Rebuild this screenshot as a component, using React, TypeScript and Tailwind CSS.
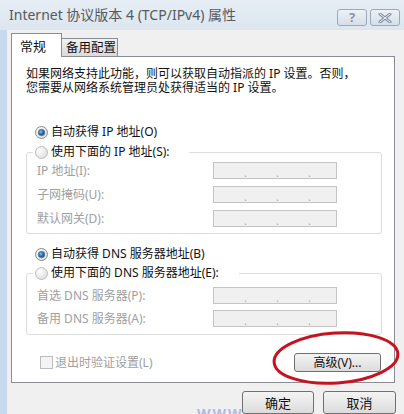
import React from "react";

function Radio({ checked, disabled }: { checked?: boolean; disabled?: boolean }) {
  return (
    <svg width="13" height="13" viewBox="0 0 13 13" className="shrink-0">
      <defs>
        <radialGradient id="rbg" cx="0.35" cy="0.35" r="0.8">
          <stop offset="0" stopColor="#ffffff" />
          <stop offset="1" stopColor={disabled ? "#ececec" : "#d8d8d8"} />
        </radialGradient>
        <radialGradient id="rdot" cx="0.4" cy="0.4" r="0.7">
          <stop offset="0" stopColor="#8fc3ee" />
          <stop offset="0.5" stopColor="#2b6aa3" />
          <stop offset="1" stopColor="#123e66" />
        </radialGradient>
      </defs>
      <circle cx="6.5" cy="6.5" r="6" fill="url(#rbg)" stroke={disabled ? "#bdbdbd" : "#8a8c8e"} strokeWidth="1" />
      {checked && <circle cx="6.5" cy="6.5" r="3.3" fill="url(#rdot)" stroke="#4a7fb0" strokeWidth="0.6" />}
    </svg>
  );
}

function IpBox() {
  return (
    <div className="w-[124px] h-[17px] border border-[#c4c4c4] bg-[#f0f0f0] flex items-center text-[#a8a8a8] text-[11px] leading-none">
      <span className="w-[30px]" />
      <span className="w-[32px] pt-[3px]">.</span>
      <span className="w-[32px] pt-[3px]">.</span>
      <span className="w-[28px] pt-[3px]">.</span>
    </div>
  );
}

function Row({ label }: { label: string }) {
  return (
    <div className="flex items-center h-[17px]">
      <span className="w-[176px] text-[#a0a0a0]">{label}</span>
      <IpBox />
    </div>
  );
}

export default function App() {
  return (
    <div className="relative w-[404px] h-[414px] overflow-hidden bg-[#f0f0f0] text-[12px] leading-[16px] text-[#111] font-['Noto_Sans','Noto_Sans_CJK_SC',sans-serif]">
      {/* Title bar */}
      <div className="h-[30px] flex items-start bg-linear-to-b from-[#e6edf5] to-[#dde6ef]">
        <div className="pl-[9px] pt-[6px] text-[14px] leading-[18px] text-[#555a60] whitespace-nowrap">
          Internet 协议版本 4 (TCP/IPv4) 属性
        </div>
        <div className="ml-auto mt-[9px] mr-[4px] flex gap-[3px]">
          <div className="w-[30px] h-[17px] rounded-[3px] border border-[#9aa8ba] bg-linear-to-b from-[#eef2f7] to-[#d6dee9] flex items-center justify-center">
            <span className="text-[13px] leading-none font-bold text-[#8a96a6]">?</span>
          </div>
          <div className="w-[30px] h-[17px] rounded-[3px] border border-[#9aa8ba] bg-linear-to-b from-[#eef2f7] to-[#d6dee9] flex items-center justify-center">
            <svg width="14" height="10" viewBox="0 0 14 10">
              <path d="M2 1 L12 9 M12 1 L2 9" stroke="#8592a4" strokeWidth="3" strokeLinecap="round" />
              <path d="M2 1 L12 9 M12 1 L2 9" stroke="#eef2f7" strokeWidth="1" strokeLinecap="round" />
            </svg>
          </div>
        </div>
      </div>

      {/* Body */}
      <div className="flex h-[384px]">
        <div className="w-[7px] bg-[#c6d9ee]" />
        <div className="flex-1 pl-[4px] pt-[3px] flex flex-col">
          {/* Tabs */}
          <div className="flex items-end h-[23px] relative z-10">
            <div className="w-[51px] h-[24px] mb-[-1px] border border-b-0 border-[#898c95] bg-white pl-[8px] pt-[3px] text-[13px] leading-[18px] text-[#111] whitespace-nowrap">
              常规
            </div>
            <div className="w-[56px] h-[18px] border border-l-0 border-b-0 border-[#898c95] bg-linear-to-b from-[#f2f2f2] to-[#dadada] pl-[4px] text-[12.5px] leading-[17px] text-[#111] whitespace-nowrap">
              备用配置
            </div>
          </div>

          {/* Panel */}
          <div className="w-[384px] h-[331px] border border-[#898c95] bg-white pl-[14px] flex flex-col">
            <div className="mt-[10px] flex flex-col leading-[14px] whitespace-nowrap">
              <span>如果网络支持此功能，则可以获取自动指派的 IP 设置。否则，</span>
              <span>您需要从网络系统管理员处获得适当的 IP 设置。</span>
            </div>

            <div className="mt-[29px] h-[16px] flex items-center pl-[9px] gap-[3px]">
              <Radio checked />
              <span>自动获得 IP 地址(O)</span>
            </div>

            <fieldset className="mt-[4px] w-[356px] border border-[#dcdcdc] rounded-[3px] pl-[10px] pt-[2px] pb-[6px] flex flex-col gap-[7px]">
              <legend className="ml-[-4px] pl-[2px] pr-[19px] h-[16px] flex items-center gap-[3px] bg-white">
                <Radio disabled />
                <span>使用下面的 IP 地址(S):</span>
              </legend>
              <Row label="IP 地址(I):" />
              <Row label="子网掩码(U):" />
              <Row label="默认网关(D):" />
            </fieldset>

            <div className="mt-[12px] h-[16px] flex items-center pl-[9px] gap-[3px]">
              <Radio checked />
              <span>自动获得 DNS 服务器地址(B)</span>
            </div>

            <fieldset className="mt-[3px] w-[356px] border border-[#dcdcdc] rounded-[3px] pl-[10px] pt-[6px] pb-[7px] flex flex-col gap-[6px]">
              <legend className="ml-[-4px] pl-[2px] pr-[20px] h-[16px] flex items-center gap-[3px] bg-white">
                <Radio disabled />
                <span>使用下面的 DNS 服务器地址(E):</span>
              </legend>
              <Row label="首选 DNS 服务器(P):" />
              <Row label="备用 DNS 服务器(A):" />
            </fieldset>

            <div className="mt-[18px] h-[19px] flex items-center">
              <div className="ml-[14px] w-[13px] h-[13px] border border-[#bcbcbc] bg-[#f4f4f4]" />
              <span className="ml-[2px] text-[#a0a0a0]">退出时验证设置(L)</span>
              <div className="ml-auto mr-[13px] w-[87px] h-[19px] rounded-[3px] border border-[#707070] bg-linear-to-b from-[#f4f4f4] to-[#dcdcdc] flex items-center justify-center text-[#111]">
                高级(V)...
              </div>
            </div>
          </div>

          {/* Bottom buttons */}
          <div className="mt-[8px] flex justify-end gap-[9px] pr-[8px]">
            <div className="w-[72px] h-[23px] rounded-[3px] border border-[#707070] bg-linear-to-b from-[#f4f4f4] to-[#dcdcdc] flex items-center justify-center text-[13px]">
              确定
            </div>
            <div className="w-[73px] h-[23px] rounded-[3px] border border-[#707070] bg-linear-to-b from-[#f4f4f4] to-[#dcdcdc] flex items-center justify-center text-[13px]">
              取消
            </div>
          </div>
        </div>
      </div>

      {/* Watermark fragment */}
      <div className="absolute left-[197px] top-[406px] text-[14px] leading-[16px] font-bold text-[#b4b6e8] tracking-[2px]">
        WWW
      </div>

      {/* Red annotation ellipse */}
      <svg className="absolute left-[268px] top-[326px] pointer-events-none" width="136" height="64" viewBox="0 0 136 64">
        <ellipse cx="68" cy="32" rx="62" ry="25" fill="none" stroke="#c4141f" strokeWidth="3" transform="rotate(-4 68 32)" />
      </svg>
    </div>
  );
}
